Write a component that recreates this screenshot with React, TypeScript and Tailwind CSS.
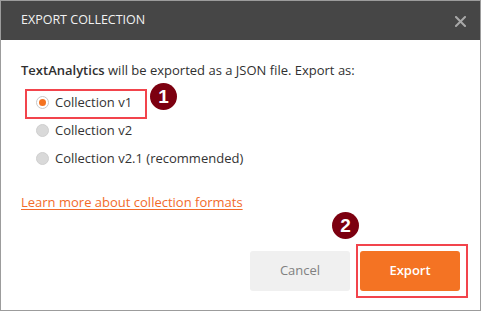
import React from 'react';

const font = { fontFamily: '"Open Sans", "Noto Sans", sans-serif' };

function Radio({ checked }: { checked?: boolean }) {
  if (checked) {
    return (
      <span className="w-[13px] h-[13px] rounded-full border border-[#c8c8c8] bg-white flex items-center justify-center shrink-0">
        <span className="w-[7px] h-[7px] rounded-full bg-[#f47321]" />
      </span>
    );
  }
  return <span className="w-[13px] h-[13px] rounded-full border border-[#cfcfcf] bg-[#d9d9d9] shrink-0" />;
}

function Badge({ n, className }: { n: string; className: string }) {
  return (
    <div
      className={`absolute w-[27px] h-[27px] rounded-full bg-[#7c0010] text-white flex items-center justify-center text-[19px] font-bold leading-none ${className}`}
      style={{ fontFamily: '"Liberation Sans", Arial, sans-serif' }}
    >
      {n}
    </div>
  );
}

export default function App() {
  const options = [
    { label: 'Collection v1', checked: true },
    { label: 'Collection v2' },
    { label: 'Collection v2.1 (recommended)' },
  ];

  return (
    <div className="relative w-[481px] h-[311px] border border-[#9c9c9c] bg-white flex flex-col text-[13px]" style={font}>
      {/* Header */}
      <div className="h-[39px] bg-[#464646] flex items-center justify-between pl-[20px] pr-[14px] shrink-0">
        <span className="text-[#f2f2f2] text-[12.5px]">EXPORT COLLECTION</span>
        <svg width="11" height="11" viewBox="0 0 11 11" className="mt-[1px]">
          <path d="M1 1 L10 10 M10 1 L1 10" stroke="#a8a8a8" strokeWidth="2" strokeLinecap="square" />
        </svg>
      </div>

      {/* Body */}
      <div className="flex-1 flex flex-col px-[20px] pt-[21px] pb-[19px]">
        <p className="leading-[18px] text-[#303030]">
          <span className="font-semibold">TextAnalytics</span> will be exported as a JSON file. Export as:
        </p>

        <div className="mt-[9px] flex flex-col">
          {options.map((o) => (
            <label key={o.label} className="h-[28px] flex items-center gap-[6px] pl-[15px] text-[#333]">
              <Radio checked={o.checked} />
              <span className="leading-[18px]">{o.label}</span>
            </label>
          ))}
        </div>

        <a className="mt-[21px] self-start leading-[18px] text-[#f26b2a] underline underline-offset-2">
          Learn more about collection formats
        </a>

        <div className="mt-auto flex justify-end gap-[10px]">
          <button className="w-[100px] h-[40px] rounded-[3px] bg-[#f0f0f0] text-[#808080] text-[13px]">Cancel</button>
          <button className="w-[100px] h-[40px] rounded-[3px] bg-[#f47323] text-white text-[13px] font-semibold">Export</button>
        </div>
      </div>

      {/* Annotations */}
      <div className="absolute left-[24px] top-[88px] w-[122px] h-[30px] border-[2px] border-[#f2444c]" />
      <Badge n="1" className="left-[149px] top-[82px]" />
      <div className="absolute left-[355px] top-[243px] w-[112px] h-[54px] border-[2px] border-[#f2444c]" />
      <Badge n="2" className="left-[331px] top-[211px]" />
    </div>
  );
}
